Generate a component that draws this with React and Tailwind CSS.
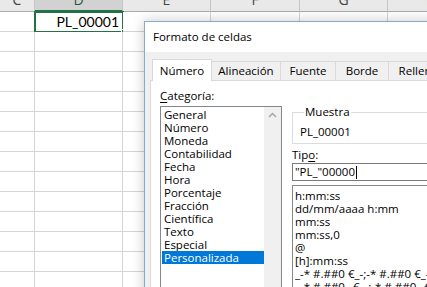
const cols = [
  { name: 'C', w: 35 },
  { name: 'D', w: 88 },
  { name: 'E', w: 88 },
  { name: 'F', w: 89 },
  { name: 'G', w: 88 },
  { name: 'H', w: 88 },
];

const rows = Array.from({ length: 14 }, (_, i) => i);

const categories = [
  'General',
  'Número',
  'Moneda',
  'Contabilidad',
  'Fecha',
  'Hora',
  'Porcentaje',
  'Fracción',
  'Científica',
  'Texto',
  'Especial',
  'Personalizada',
];

const formats = [
  'h:mm:ss',
  'dd/mm/aaaa h:mm',
  'mm:ss',
  'mm:ss,0',
  '@',
  '[h]:mm:ss',
  '_-* #.##0 €_-;-* #.##0 €_-;_-* "-" €_-;_-@_-',
  '_-* #.##0 _€_-;-* #.##0 _€_-;_-* "-" _€_-;_-@_-',
];

const tabs = [
  { label: 'Número', w: 'w-[60px]' },
  { label: 'Alineación', w: 'w-[69px]' },
  { label: 'Fuente', w: 'w-[55px]' },
  { label: 'Borde', w: 'w-[53px]' },
  { label: 'Relleno', w: 'w-[60px]' },
];

const Sheet = () => (
  <div className="flex flex-col">
    <div className="flex h-[12px] bg-[#e9e9e9]">
      {cols.map((c) => (
        <div
          key={c.name}
          style={{ width: c.w }}
          className={
            c.name === 'D'
              ? 'flex shrink-0 justify-center overflow-hidden border-r border-b-2 border-r-[#c6c6c6] border-b-[#217346] bg-[#d2d2d2] text-[#1e5c38]'
              : 'flex shrink-0 justify-center overflow-hidden border-r border-b border-r-[#c6c6c6] border-b-[#ababab] text-[#444]'
          }
        >
          <span className="mt-[-8px] text-[14px] leading-[16px]">{c.name}</span>
        </div>
      ))}
    </div>
    {rows.map((r) => (
      <div key={r} className="flex h-[20px]">
        {cols.map((c) => (
          <div
            key={c.name}
            style={{ width: c.w }}
            className="relative shrink-0 border-r border-b border-[#d4d4d4] bg-white"
          >
            {r === 0 && c.name === 'D' && (
              <>
                <div className="absolute left-[-1px] top-[-1px] h-[22px] w-[90px] border-2 border-[#217346]" />
                <div className="absolute right-[-4px] bottom-[-3px] h-[5px] w-[5px] border border-white bg-[#217346]" />
                <div className="flex h-full items-center justify-end pr-[3px] font-['Lato',sans-serif] text-[14px] text-black">
                  PL_00001
                </div>
              </>
            )}
          </div>
        ))}
      </div>
    ))}
  </div>
);

const Dialog = () => (
  <div className="absolute left-[144px] top-[21px] h-[300px] w-[320px] border border-[#8aa9cf] bg-[#f0f0f0] font-['Open_Sans',sans-serif] text-[11.5px] text-black shadow-[0_0_12px_rgba(0,0,0,0.22)]">
    <div className="flex h-[30px] items-center bg-white pl-[8px] text-[11.5px]">Formato de celdas</div>
    <div className="pl-[5px] pt-[7px]">
      <div className="flex h-[21px] items-end pl-[2px]">
        {tabs.map((t, i) =>
          i === 0 ? (
            <div
              key={t.label}
              className={`relative z-10 mb-[-1px] flex h-[22px] shrink-0 items-center justify-center border border-b-0 border-[#d9d9d9] bg-white ${t.w}`}
            >
              {t.label}
            </div>
          ) : (
            <div
              key={t.label}
              className={`flex h-[19px] shrink-0 items-center justify-center border border-l-0 border-b-0 border-[#d9d9d9] bg-[#f0f0f0] ${t.w}`}
            >
              {t.label}
            </div>
          )
        )}
      </div>
      <div className="flex h-[260px] gap-[10px] border border-[#d9d9d9] bg-white pl-[9px]">
        <div className="flex w-[122px] shrink-0 flex-col">
          <div className="mt-[7px] mb-[2px] leading-[16px]">
            <span className="underline underline-offset-2">C</span>ategoría:
          </div>
          <div className="flex flex-1 border border-[#828790]">
            <div className="flex flex-1 flex-col pt-[1px] pl-[1px]">
              {categories.map((c) => (
                <div
                  key={c}
                  className={
                    c === 'Personalizada'
                      ? 'h-[13px] bg-[#0078d7] pl-[2px] leading-[13px] text-white'
                      : 'h-[13px] pl-[2px] leading-[13px]'
                  }
                >
                  {c}
                </div>
              ))}
            </div>
            <div className="flex w-[17px] shrink-0 justify-center bg-[#f0f0f0] pt-[5px]">
              <svg width="9" height="6" viewBox="0 0 9 6">
                <path d="M1 5 L4.5 1.5 L8 5" fill="none" stroke="#a6a6a6" strokeWidth="1.5" />
              </svg>
            </div>
          </div>
        </div>
        <div className="flex min-w-0 flex-1 flex-col">
          <fieldset className="mt-[24px] border border-[#dcdcdc] pl-[7px] pb-[3px]">
            <legend className="ml-[4px] px-[1px] leading-[14px]">Muestra</legend>
            <div className="pt-[5px] leading-[16px]">PL_00001</div>
          </fieldset>
          <div className="mt-[3px] leading-[16px]">
            Tip<span className="underline underline-offset-2">o</span>:
          </div>
          <div className="flex h-[18px] items-center border border-[#7a7a7a] pl-[2px] leading-[16px]">
            <span>"PL_"00000</span>
            <span className="ml-[1px] h-[13px] w-px bg-black" />
          </div>
          <div className="mt-[4px] flex-1 border border-[#828790] pt-[3px] pl-[2px]">
            {formats.map((f) => (
              <div key={f} className="h-[13px] overflow-hidden whitespace-nowrap leading-[13px]">
                {f}
              </div>
            ))}
          </div>
        </div>
      </div>
    </div>
  </div>
);

export default function App() {
  return (
    <div className="relative h-[287px] w-[427px] overflow-hidden bg-white font-['Open_Sans',sans-serif]">
      <Sheet />
      <Dialog />
    </div>
  );
}
